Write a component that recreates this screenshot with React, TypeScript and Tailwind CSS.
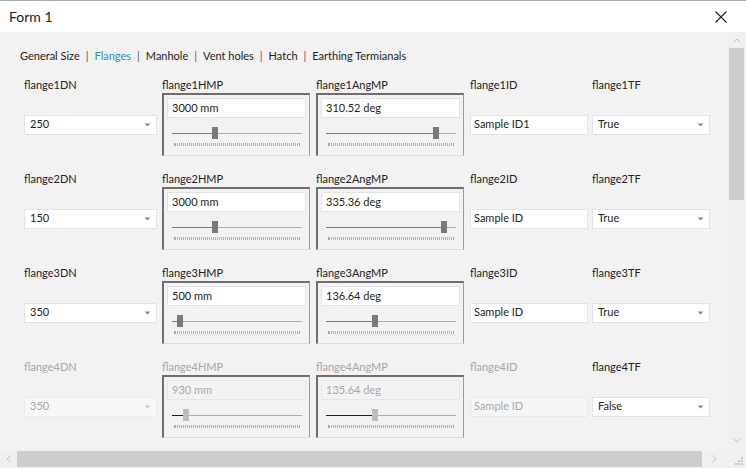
import React from "react";

type Row = {
  n: number;
  dn: string;
  h: string;
  hPos: number;
  ang: string;
  aPos: number;
  id: string;
  tf: string;
  disabled?: boolean;
};

const rows: Row[] = [
  { n: 1, dn: "250", h: "3000 mm", hPos: 43, ang: "310.52 deg", aPos: 110, id: "Sample ID1", tf: "True" },
  { n: 2, dn: "150", h: "3000 mm", hPos: 43, ang: "335.36 deg", aPos: 118, id: "Sample ID", tf: "True" },
  { n: 3, dn: "350", h: "500 mm", hPos: 8, ang: "136.64 deg", aPos: 49, id: "Sample ID", tf: "True" },
  { n: 4, dn: "350", h: "930 mm", hPos: 14, ang: "135.64 deg", aPos: 49, id: "Sample ID", tf: "False", disabled: true },
];

function Arrow({ disabled }: { disabled?: boolean }) {
  return (
    <svg width="7" height="4" viewBox="0 0 7 4" className="shrink-0">
      <path d="M0.5 0.5 L6.5 0.5 L3.5 3.5 Z" fill={disabled ? "#c8c8c8" : "#8a8a8a"} />
    </svg>
  );
}

function Combo({ value, width, disabled }: { value: string; width: string; disabled?: boolean }) {
  return (
    <div
      className={
        "h-[20px] flex items-center justify-between pl-[5px] pr-[5px] border " +
        width +
        (disabled
          ? " bg-[#f7f7f7] border-[#ececec] text-[#a8a8a8]"
          : " bg-white border-[#e3e3e3] text-[#222222]")
      }
    >
      <span>{value}</span>
      <Arrow disabled={disabled} />
    </div>
  );
}

function Slider({ pos, disabled }: { pos: number; disabled?: boolean }) {
  return (
    <div className="ml-[5px] mt-[9px] w-[130px]">
      <div className="relative h-[12px] w-[130px]">
        <div className="absolute left-0 right-0 top-[6px] h-px bg-[#adadad]" />
        <div
          className={"absolute left-0 top-[6px] h-px " + (disabled ? "bg-[#202020]" : "bg-[#2f8fdc]")}
          style={{ width: pos }}
        />
        <div
          className={"absolute top-0 h-[12px] w-[6px] " + (disabled ? "bg-[#bdbdbd]" : "bg-[#7a7a7a]")}
          style={{ left: pos - 3 }}
        />
      </div>
      <div className="ml-[2px] mt-[4px] h-[3px] w-[126px] border-x border-[#a0a0a0] bg-[repeating-linear-gradient(90deg,#b0b0b0_0_1px,transparent_1px_2px)]" />
    </div>
  );
}

function SliderBox({ value, pos, disabled }: { value: string; pos: number; disabled?: boolean }) {
  return (
    <div className="w-[148px] h-[63px] border-t-2 border-l-2 border-[#6e6e6e] border-r border-r-[#9a9a9a] border-b border-b-[#dedede] pt-[3px] px-[3px]">
      <div
        className={
          "h-[20px] flex items-center pl-[4px] border " +
          (disabled ? "bg-[#f3f3f3] border-[#e6e6e6] text-[#a8a8a8]" : "bg-white border-[#e3e3e3] text-[#222222]")
        }
      >
        {value}
      </div>
      <Slider pos={pos} disabled={disabled} />
    </div>
  );
}

function FlangeRow({ r }: { r: Row }) {
  const lbl = r.disabled ? "text-[#a6a6a6]" : "text-[#222222]";
  return (
    <div className="flex">
      <div className="w-[138px] flex flex-col">
        <div className={"h-[14px] leading-[15px] " + lbl}>flange{r.n}DN</div>
        <div className="flex-1 flex items-center pt-[2px]">
          <Combo value={r.dn} width="w-[133px]" disabled={r.disabled} />
        </div>
      </div>
      <div className="w-[154px] flex flex-col gap-[2px]">
        <div className={"h-[14px] leading-[15px] " + lbl}>flange{r.n}HMP</div>
        <SliderBox value={r.h} pos={r.hPos} disabled={r.disabled} />
      </div>
      <div className="w-[154px] flex flex-col gap-[2px]">
        <div className={"h-[14px] leading-[15px] " + lbl}>flange{r.n}AngMP</div>
        <SliderBox value={r.ang} pos={r.aPos} disabled={r.disabled} />
      </div>
      <div className="w-[122px] flex flex-col">
        <div className={"h-[14px] leading-[15px] " + lbl}>flange{r.n}ID</div>
        <div className="flex-1 flex items-center pt-[2px]">
          <div
            className={
              "w-[118px] h-[20px] flex items-center pl-[3px] border " +
              (r.disabled ? "bg-[#f5f5f5] border-[#e8e8e8] text-[#a8a8a8]" : "bg-white border-[#e3e3e3] text-[#222222]")
            }
          >
            {r.id}
          </div>
        </div>
      </div>
      <div className="w-[118px] flex flex-col">
        <div className="h-[14px] leading-[15px] text-[#222222]">flange{r.n}TF</div>
        <div className="flex-1 flex items-center pt-[2px]">
          <Combo value={r.tf} width="w-[118px]" />
        </div>
      </div>
    </div>
  );
}

const tabs = ["General Size", "Flanges", "Manhole", "Vent holes", "Hatch", "Earthing Termianals"];

export default function App() {
  return (
    <div className="w-[746px] h-[468px] flex flex-col bg-[#f2f2f2] border-t border-[#a9a9a9] overflow-hidden font-['Lato','Noto_Sans',sans-serif] text-[11px] text-[#222222]">
      <div className="h-[31px] shrink-0 bg-white flex items-center justify-between pl-[9px] pr-[19px]">
        <span className="text-[14px] text-[#222222]">Form 1</span>
        <svg width="12" height="12" viewBox="0 0 12 12">
          <path d="M0.5 0.5 L11.5 11.5 M11.5 0.5 L0.5 11.5" stroke="#222" strokeWidth="1.1" />
        </svg>
      </div>
      <div className="flex-1 flex min-h-0">
        <div className="flex-1 overflow-hidden flex flex-col">
          <div className="h-[14px] mt-[17px] ml-[20px] flex items-center leading-[14px]">
            {tabs.map((t, i) => (
              <React.Fragment key={t}>
                {i > 0 && <span className="mx-[6px] text-[#555]">|</span>}
                <span className={t === "Flanges" ? "text-[#2a8fc4]" : "text-[#222222]"}>{t}</span>
              </React.Fragment>
            ))}
          </div>
          <div className="ml-[24px] mt-[14px] flex flex-col gap-[15px]">
            {rows.map((r) => (
              <FlangeRow key={r.n} r={r} />
            ))}
          </div>
        </div>
        <div className="w-[19px] shrink-0 bg-[#f0f0f0] flex flex-col items-center">
          <div className="h-[16px] w-full flex items-center justify-center">
            <svg width="8" height="5" viewBox="0 0 8 5">
              <path d="M0.5 4.5 L4 1 L7.5 4.5" stroke="#c2c2c2" fill="none" />
            </svg>
          </div>
          <div className="mt-[0px] h-[152px] w-[15px] bg-[#cdcdcd]" />
          <div className="flex-1" />
          <div className="h-[16px] w-full flex items-center justify-center mb-[2px]">
            <svg width="8" height="5" viewBox="0 0 8 5">
              <path d="M0.5 0.5 L4 4 L7.5 0.5" stroke="#c2c2c2" fill="none" />
            </svg>
          </div>
        </div>
      </div>
      <div className="h-[18px] shrink-0 flex bg-[#f0f0f0]">
        <div className="w-[17px] flex items-center justify-center">
          <svg width="5" height="8" viewBox="0 0 5 8">
            <path d="M4.5 0.5 L1 4 L4.5 7.5" stroke="#c2c2c2" fill="none" />
          </svg>
        </div>
        <div className="my-[1px] w-[685px] bg-[#cdcdcd]" />
        <div className="flex-1 flex items-center justify-center">
          <svg width="5" height="8" viewBox="0 0 5 8">
            <path d="M0.5 0.5 L4 4 L0.5 7.5" stroke="#c2c2c2" fill="none" />
          </svg>
        </div>
        <div className="w-[19px] flex items-end justify-end pr-[2px] pb-[2px]">
          <svg width="9" height="9" viewBox="0 0 9 9">
            <rect x="6" y="0" width="2" height="2" fill="#c4c4c4" />
            <rect x="3" y="3" width="2" height="2" fill="#c4c4c4" />
            <rect x="6" y="3" width="2" height="2" fill="#c4c4c4" />
            <rect x="0" y="6" width="2" height="2" fill="#c4c4c4" />
            <rect x="3" y="6" width="2" height="2" fill="#c4c4c4" />
            <rect x="6" y="6" width="2" height="2" fill="#c4c4c4" />
          </svg>
        </div>
      </div>
    </div>
  );
}
